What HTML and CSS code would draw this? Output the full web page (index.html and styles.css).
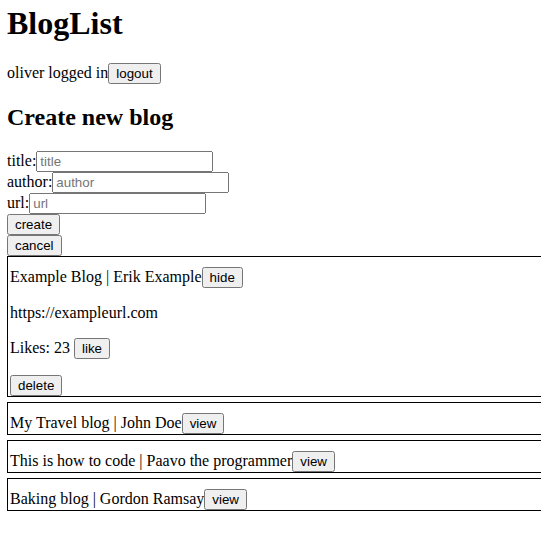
FILE: index.html
```html
<!DOCTYPE html>
<html>
<head>
<meta charset="utf-8">
<title>BlogList</title>
<link rel="stylesheet" href="styles.css">
</head>
<body>
<div class="app">
  <h1 class="title">BlogList</h1>
  <p class="user">oliver logged in<button class="btn" type="button">logout</button></p>
  <h2 class="subtitle">Create new blog</h2>
  <form class="blog-form">
    <div class="field">title:<input class="text-input" type="text" placeholder="title"></div>
    <div class="field">author:<input class="text-input" type="text" placeholder="author"></div>
    <div class="field">url:<input class="text-input" type="text" placeholder="url"></div>
    <button class="btn" type="button">create</button>
  </form>
  <div><button class="btn" type="button">cancel</button></div>
  <div class="blog">
    <div>Example Blog | Erik Example<button class="btn" type="button">hide</button></div>
    <div>
      <p class="detail">https://exampleurl.com</p>
      <p class="detail">Likes: 23 <button class="btn" type="button">like</button></p>
      <button class="btn" type="button">delete</button>
    </div>
  </div>
  <div class="blog">
    <div>My Travel blog | John Doe<button class="btn" type="button">view</button></div>
  </div>
  <div class="blog">
    <div>This is how to code | Paavo the programmer<button class="btn" type="button">view</button></div>
  </div>
  <div class="blog">
    <div>Baking blog | Gordon Ramsay<button class="btn" type="button">view</button></div>
  </div>
</div>
</body>
</html>
```
FILE: styles.css
```css
body {
  margin: 0 8px 8px 7px;
  font-family: "Liberation Serif", "Times New Roman", serif;
  font-size: 16px;
  color: #000;
  background: #fff;
}
.title {
  font-size: 32px;
  margin: 5px 0 21.44px;
}
.user {
  margin: 16px 0;
}
.subtitle {
  font-size: 24px;
  margin: 19.92px 0;
}
.blog-form {
  margin: 0;
}
.text-input {
  box-sizing: border-box;
  width: 177px;
  height: 21px;
  font-family: "Liberation Sans", Arial, sans-serif;
  font-size: 13.333px;
}
.btn {
  font-family: "Liberation Sans", Arial, sans-serif;
  font-size: 13.333px;
}
.blog {
  padding-top: 10px;
  padding-left: 2px;
  border: 1px solid #000;
  border-right: 0;
  margin-bottom: 5px;
  margin-right: -8px;
}
.detail {
  margin: 16px 0;
}
```
